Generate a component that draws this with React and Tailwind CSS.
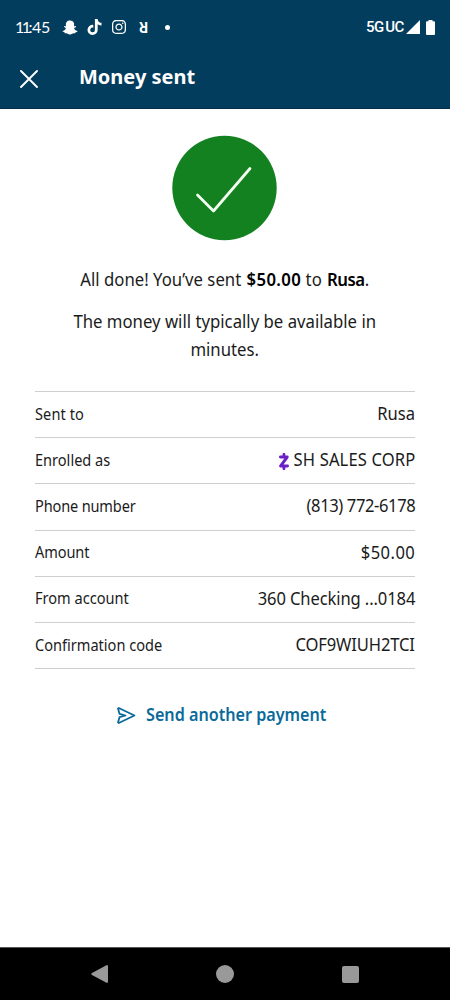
import { FaSnapchatGhost } from "react-icons/fa";
import { FaInstagram, FaTiktok } from "react-icons/fa6";

const details = [
  { label: "Sent to", value: "Rusa", labelClass: "tracking-[0.1px]", valueClass: "tracking-normal" },
  { label: "Enrolled as", value: "SH SALES CORP", zelle: true, labelClass: "tracking-normal", valueClass: "tracking-[0.15px]" },
  { label: "Phone number", value: "(813) 772-6178", labelClass: "tracking-[-0.17px]", valueClass: "tracking-[-0.42px]" },
  { label: "Amount", value: "$50.00", labelClass: "tracking-[-0.1px]", valueClass: "tracking-[0.5px]" },
  { label: "From account", value: "360 Checking ...0184", labelClass: "tracking-normal", valueClass: "tracking-[-0.12px]" },
  { label: "Confirmation code", value: "COF9WIUH2TCI", labelClass: "tracking-normal", valueClass: "tracking-[-0.14px]" },
];

export default function App() {
  return (
    <div className="flex h-[1000px] w-[450px] flex-col overflow-hidden bg-white font-['Noto_Sans',sans-serif] text-[#1b1b1b]">
      <header className="h-[109px] shrink-0 border-b border-[#042f4b] bg-[#033d5d] text-white">
        <StatusBar />
        <div className="flex h-[46px] items-center pl-[20px]">
          <button type="button" aria-label="Close" className="mt-[3px]">
            <svg className="h-[18px] w-[18px]" viewBox="0 0 18 18" fill="none" stroke="currentColor" strokeWidth="1.9" strokeLinecap="round">
              <path d="M1 1l16 16M17 1L1 17" />
            </svg>
          </button>
          <h1 className="ml-[41px] whitespace-nowrap text-[20px] font-bold">Money sent</h1>
        </div>
      </header>

      <main className="flex flex-1 flex-col items-center bg-white pt-[26px]">
        <svg className="h-[106px] w-[106px] shrink-0" viewBox="0 0 106 106" fill="none">
          <circle cx="52.5" cy="53" r="52.2" fill="#148120" />
          <path d="M26 59.5L42 75.5L78.5 33" transform="translate(-.5 .5)" stroke="#f4fff2" strokeWidth="2.7" strokeLinecap="round" strokeLinejoin="round" />
        </svg>

        <div className="mt-[24px] scale-x-[0.93] text-center text-[18px] leading-[28px]">
          <p className="whitespace-nowrap">
            All done! You’ve sent <b className="ml-[1px] font-semibold tracking-[0.4px] text-black">$50.00</b> to <b className="ml-[1px] font-semibold tracking-[-0.5px] text-black">Rusa</b>.
          </p>
          <p className="mt-[14px] whitespace-nowrap">
            The money will typically be available in
            <br />
            minutes.
          </p>
        </div>

        <dl className="mt-[28px] w-[380px] border-t border-[#cfcfcf]">
          {details.map(row => <DetailRow key={row.label} {...row} />)}
        </dl>

        <button type="button" className="mt-[31px] flex h-[28px] items-center self-start pl-[117px] text-[#0b6a9a]">
          <svg className="mt-[3px] h-[17px] w-[19px]" viewBox="0 0 19 17" fill="none" stroke="currentColor" strokeWidth="1.8" strokeLinejoin="round" strokeLinecap="round">
            <path d="M1.8 1L17.4 8.5L1.8 16L1 15.4L2.5 10.2L8.5 8.5L2.5 6.8L1 1.6Z" />
          </svg>
          <span className="ml-[10px] origin-left scale-x-[0.897] whitespace-nowrap text-[18px] font-semibold">Send another payment</span>
        </button>
      </main>

      <NavBar />
    </div>
  );
}

function StatusBar() {
  return (
    <div className="flex h-[54px] items-center justify-between pl-[15px] pr-[15px]">
      <div className="flex items-center">
        <span className="w-[47px] whitespace-nowrap font-['Lato',sans-serif] text-[16px] leading-none">
          <span className="tracking-[-2.6px]">11</span><span className="tracking-[-0.3px]">:45</span>
        </span>
        <FaSnapchatGhost className="h-[15px] w-[16px]" />
        <FaTiktok className="ml-[9px] h-[16px] w-[15px]" />
        <FaInstagram className="ml-[9px] h-[16px] w-[16px]" />
        <span className="ml-[12px] inline-block rotate-180 font-['Roboto',sans-serif] text-[14px] font-bold leading-none">R</span>
        <span className="ml-[17px] h-[5px] w-[5px] rounded-full bg-white" />
      </div>
      <div className="flex items-center">
        <span className="whitespace-nowrap font-['Roboto',sans-serif] text-[15px] font-medium leading-none tracking-[-0.4px] [word-spacing:-2px]">5G UC</span>
        <svg className="ml-[2px] h-[14px] w-[14px]" viewBox="0 0 14 14" fill="currentColor">
          <path d="M14 0V14H0Z" />
        </svg>
        <svg className="ml-[6px] h-[15px] w-[9px]" viewBox="0 0 9 15" fill="currentColor">
          <path d="M2.5 0h4v1.3H8q1 0 1 1V14q0 1-1 1H1q-1 0-1-1V2.3q0-1 1-1h1.5z" />
        </svg>
      </div>
    </div>
  );
}

function DetailRow({ label, value, zelle, labelClass, valueClass }) {
  return (
    <div className="flex h-[46.2px] items-center justify-between border-b border-[#cfcfcf] pb-[2px]">
      <dt className={`origin-left scale-x-[0.91] whitespace-nowrap text-[16px] ${labelClass}`}>{label}</dt>
      <dd className={`flex origin-right scale-x-[0.92] items-center whitespace-nowrap text-[18px] ${valueClass}`}>
        {zelle && (
          <svg className="mr-[5px] mt-[3px] h-[17px] w-[11px]" viewBox="0 0 10 16" preserveAspectRatio="none" fill="none" stroke="#6b1fc4" strokeWidth="2.8" strokeLinecap="round" strokeLinejoin="round">
            <path d="M1.5 3.8H8.3L1.7 12.2H8.6M5 1.3V3.5M5 12.5V14.7" />
          </svg>
        )}
        {value}
      </dd>
    </div>
  );
}

function NavBar() {
  return (
    <nav className="flex h-[53px] shrink-0 items-center justify-between border-t border-[#555] bg-black pl-[91px] pr-[91px] text-[#999]">
      <svg className="h-[18px] w-[17px]" viewBox="0 0 17 18" fill="currentColor">
        <path d="M15 .4Q17-.5 17 1.5V16.5Q17 18.5 15 17.6L1 10Q-.4 9 1 8Z" />
      </svg>
      <span className="h-[18px] w-[18px] rounded-full bg-[#999]" />
      <span className="h-[17px] w-[17px] rounded-[2px] bg-[#999]" />
    </nav>
  );
}
